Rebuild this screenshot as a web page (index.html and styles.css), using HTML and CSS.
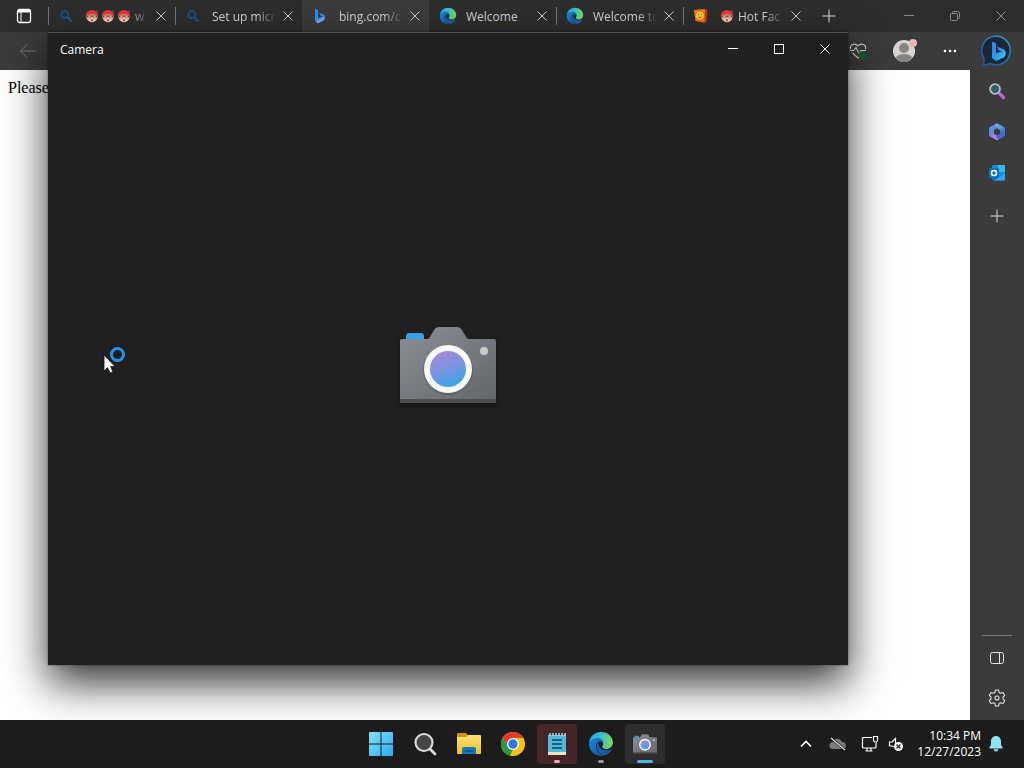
FILE: index.html
```html
<!DOCTYPE html>
<html lang="en">
<head>
<meta charset="utf-8">
<title>Desktop</title>
<link rel="stylesheet" href="styles.css">
</head>
<body>
<svg class="defs" width="0" height="0" aria-hidden="true">
  <defs>
    <linearGradient id="gBody" x1="0" y1="0" x2="1" y2="1"><stop offset="0" stop-color="#8a9096"/><stop offset="1" stop-color="#646569"/></linearGradient>
    <linearGradient id="gLens" x1=".3" y1="0" x2=".7" y2="1"><stop offset="0" stop-color="#a588de"/><stop offset=".45" stop-color="#7d93e0"/><stop offset="1" stop-color="#34a5e8"/></linearGradient>
    <linearGradient id="gEdge" x1="0" y1="0" x2="1" y2=".2"><stop offset="0" stop-color="#2b9ee0"/><stop offset=".5" stop-color="#34c1d4"/><stop offset="1" stop-color="#6fd664"/></linearGradient>
    <linearGradient id="gEdge2" x1="0" y1="0" x2="1" y2="1"><stop offset="0" stop-color="#1b8fe0"/><stop offset="1" stop-color="#114a8b"/></linearGradient>
    <linearGradient id="gBing" x1="0" y1="0" x2="1" y2="1"><stop offset="0" stop-color="#2f7df0"/><stop offset=".6" stop-color="#2ba0f2"/><stop offset="1" stop-color="#54d6ee"/></linearGradient>
    <linearGradient id="gRing" x1="0" y1="1" x2="1" y2="0"><stop offset="0" stop-color="#1b4f9c"/><stop offset="1" stop-color="#2f93c4"/></linearGradient>
    <linearGradient id="gWin" gradientUnits="userSpaceOnUse" x1="0" y1="0" x2="24" y2="24"><stop offset="0" stop-color="#7fe3fb"/><stop offset="1" stop-color="#2ba8ef"/></linearGradient>
    <linearGradient id="gFolder" x1="0" y1="0" x2="0" y2="1"><stop offset="0" stop-color="#ffe07a"/><stop offset="1" stop-color="#f5bd28"/></linearGradient>
    <linearGradient id="gOffice" x1="0" y1="0" x2="1" y2="1"><stop offset="0" stop-color="#7cc3ee"/><stop offset="1" stop-color="#2f6fce"/></linearGradient>
    <linearGradient id="gOffice2" x1="0" y1="0" x2="1" y2="0"><stop offset="0" stop-color="#8a6ee0"/><stop offset="1" stop-color="#d59aec"/></linearGradient>
  </defs>
  <symbol id="close" viewBox="0 0 10 10"><path d="M.5.5l9 9M9.500.5l-9 9" fill="none" stroke="currentColor"/></symbol>
  <symbol id="plus" viewBox="0 0 14 14"><path d="M7 .5v13M.5 7h13" fill="none" stroke="currentColor"/></symbol>
  <symbol id="minus" viewBox="0 0 10 10"><path d="M0 4.500h10" stroke="currentColor"/></symbol>
  <symbol id="search-blue" viewBox="0 0 16 16"><circle cx="6.800" cy="6.500" r="3.500" fill="none" stroke="#1c4f91" stroke-width="1.800"/><path d="M9.500 9.300l3.500 3.500" stroke="#1c4f91" stroke-width="2.400" stroke-linecap="round"/></symbol>
  <symbol id="bing" viewBox="0 0 16 16"><path d="M3 .8l3 1.100v8.400l6.800-2.600c.7 2-.1 3.700-1.700 4.700L6 15.300l-3-2.200z" fill="url(#gBing)"/><path d="M7.200 4.800l4.200 1.800c1.400.8 1.900 2.200 1.500 3.800-.4-1-1-1.500-2-1.900L8.500 7.600z" fill="#3a8df0"/><path d="M4 13.800l7-3.800 1.800-.5c.1 1.400-.6 2.300-1.700 3L6 15.300z" fill="#91a5ed"/></symbol>
  <symbol id="edge" viewBox="0 0 24 24"><path d="M1 11C1.600 5 6.200 1 12 1c6.400 0 11 4.500 11 9.600 0 3.700-2.800 6-6 6-2.500 0-4-1-4-2 0-.8 1-1.200 1-2.900C14 9 11.600 7.400 8.700 7.400 5 7.400 2 9 1 11z" fill="url(#gEdge)"/><path d="M1 12c0-3 3.500-5.600 7.700-5.600 3.300 0 5.500 2.200 5.500 5-1-1.600-2.500-2-3.600-1.700C5 11.200 7 21.500 15.500 22.300 14.500 22.800 13.200 23 12 23 5.900 23 1 18.200 1 12z" fill="url(#gEdge2)"/><path d="M10.400 9.900c-1.500.8-2.400 2.600-2.400 4.800 0 4.600 4.200 7.800 8.600 7.400 2.200-1 4-2.500 5.100-4.500.3-.7-.1-.9-.6-.6-4.400 2.400-10.200.4-11.300-4-.2-1.100 0-2.200.6-3.100z" fill="#1b5fae"/></symbol>
  <symbol id="hot" viewBox="0 0 16 16"><circle cx="8" cy="8.500" r="6.500" fill="#ecb088"/><path d="M1 8C1 4 4 1.500 8 1.500S15 4 15 8c-4-2.200-10-2.200-14 0z" fill="#ee3437"/><path d="M2 7.300h12v2.200H9.500L8 8.500 6.500 9.500H2z" fill="#6b4040"/><path d="M3.800 8.300h2.400M9.800 8.300h2.400" stroke="#f4f4f4" stroke-width="1.100"/><path d="M4 11h8c-.5 2.500-1.800 4-4 4s-3.500-1.500-4-4z" fill="#f6dfd2"/><path d="M6 12h4l-2 2.800z" fill="#d8343c"/><path d="M12 1.500l3 1-1.500 2z" fill="#51638c"/></symbol>
  <symbol id="camera" viewBox="0 0 96 78"><path d="M6 14V9q0-3 3-3h12q3 0 3 3v5z" fill="#36a1dc"/><path d="M2 12h25c2 0 3-2 4-4l3-5c1-2 3-3 5-3h18c2 0 4 1 5 3l3 5c1 2 2 4 4 4h25q2 0 2 2v60q0 2-2 2H2q-2 0-2-2V14q0-2 2-2z" fill="url(#gBody)"/><path d="M0 72h96v2q0 2-2 2H2q-2 0-2-2z" fill="#4d4e51"/><circle cx="48" cy="43" r="25" fill="#3c3e43" opacity=".35"/><circle cx="48" cy="42" r="24" fill="#fafafa"/><circle cx="48" cy="42" r="18" fill="url(#gLens)"/><circle cx="84" cy="24" r="4" fill="#c8cacf"/></symbol>
</svg>

<div class="desktop">
  <main class="browser">
    <header class="tabstrip">
      <button class="tab-menu" aria-label="Tab actions"><svg width="16" height="16" viewBox="0 0 16 16" fill="none" stroke="#fff"><rect x="1.500" y="1.500" width="13" height="13" rx="2" stroke-width="1.300"/><path d="M2 3h12" stroke-width="3"/><path d="M5 4v10"/></svg></button>
      <div class="tab"><svg class="fav"><use href="#search-blue"/></svg><span class="title faces"><svg><use href="#hot"/></svg><svg><use href="#hot"/></svg><svg><use href="#hot"/></svg><span>w</span></span><button class="x" aria-label="Close tab"><svg><use href="#close"/></svg></button></div>
      <div class="tab"><svg class="fav"><use href="#search-blue"/></svg><span class="title">Set up micr</span><button class="x" aria-label="Close tab"><svg><use href="#close"/></svg></button></div>
      <div class="tab active"><svg class="fav"><use href="#bing"/></svg><span class="title">bing.com/c</span><button class="x" aria-label="Close tab"><svg><use href="#close"/></svg></button></div>
      <div class="tab"><svg class="fav large"><use href="#edge"/></svg><span class="title whole">Welcome</span><button class="x" aria-label="Close tab"><svg><use href="#close"/></svg></button></div>
      <div class="tab"><svg class="fav large"><use href="#edge"/></svg><span class="title">Welcome to</span><button class="x" aria-label="Close tab"><svg><use href="#close"/></svg></button></div>
      <div class="tab"><svg class="fav" viewBox="0 0 16 16"><path d="M1 2l11-1 2.500 1-1 12-2 1.200L2.500 13z" fill="#b93f0c"/><path d="M1 2l11-1-.5 13-9-1z" fill="#f17a19"/><circle cx="6.800" cy="7.500" r="4" fill="#ffc83c"/><path d="M5.300 6v1M8.300 6v1M5 8.700c1 1.200 2.600 1.200 3.600 0" stroke="#8d4512" stroke-width=".8" fill="none"/></svg><span class="title faces"><svg><use href="#hot"/></svg><span>Hot Fac</span></span><button class="x" aria-label="Close tab"><svg><use href="#close"/></svg></button></div>
      <button class="new-tab" aria-label="New tab"><svg width="14" height="14"><use href="#plus"/></svg></button>
      <div class="caption dim">
        <button aria-label="Minimize"><svg width="10" height="10"><use href="#minus"/></svg></button>
        <button aria-label="Restore"><svg width="10" height="10" viewBox="0 0 10 10" fill="none" stroke="currentColor"><rect x=".5" y="2.500" width="7" height="7" rx="1"/><path d="M2.500 2V1.500q0-1 1-1h4q2 0 2 2v4q0 1-1 1H8"/></svg></button>
        <button aria-label="Close"><svg width="10" height="10"><use href="#close"/></svg></button>
      </div>
    </header>
    <nav class="toolbar">
      <button class="back" aria-label="Back"><svg width="18" height="16" viewBox="0 0 18 16" fill="none" stroke="#777"><path d="M1.500 8H17M8 1.500L1.500 8 8 14.500"/></svg></button>
      <div class="tools">
        <button aria-label="Browser essentials"><svg width="18" height="18" viewBox="0 0 18 18" fill="none" stroke="#d0d0d0" stroke-width="1.100"><path d="M1.500 7C.5 2.500 6 .5 9 4c3-3.500 8.500-1.500 7.500 3M3.500 11L9 16l1.500-1.500"/><path d="M1 8.500h3.500L7 5.500l3 6 2-3h5"/><circle cx="13" cy="13" r="3.800" fill="#165f2d" stroke="none"/></svg></button>
        <button aria-label="Profile"><svg width="26" height="26" viewBox="0 0 26 26"><circle cx="13" cy="13" r="11" fill="#d7d5d3"/><circle cx="13" cy="10" r="5" fill="#898785"/><path d="M5 20.500q0-4.500 8-4.500t8 4.500c-4 4.500-12 4.500-16 0z" fill="#898785"/><circle cx="22" cy="5" r="4" fill="#edb5b5"/></svg></button>
        <button aria-label="Settings and more"><svg width="14" height="4" viewBox="0 0 14 4" fill="#fff"><circle cx="2" cy="2" r="1.300"/><circle cx="7" cy="2" r="1.300"/><circle cx="12" cy="2" r="1.300"/></svg></button>
        <button class="chat" aria-label="Bing Chat"><svg width="32" height="32" viewBox="0 0 32 32"><path d="M2 30q1.500-3 .8-7A14.300 14.300 0 1 1 9 28.500Q5.500 30.500 2 30z" fill="#1d2733" stroke="url(#gRing)" stroke-width="1.600"/><path d="M11 6.500l4 1.500v10l6-1.200-3.500-1.500-1.500-3.800 6 2.500c4 2 3.500 6.500.5 8.500L15 26l-4-3z" fill="url(#gBing)"/></svg></button>
      </div>
    </nav>
    <div class="content">
      <article class="page">Please</article>
      <aside class="sidebar">
        <button aria-label="Search"><svg width="18" height="18" viewBox="0 0 18 18"><path d="M11.500 11.500l4 4" stroke="#bd62d2" stroke-width="3.200" stroke-linecap="round"/><circle cx="7" cy="7" r="4.900" fill="#305d6e" stroke="#bac2c7" stroke-width="1.800"/></svg></button>
        <button aria-label="Microsoft 365"><svg width="18" height="18" viewBox="0 0 18 18"><path d="M10 .8L16 4q1 .7 1 2v5l-5-2V7L8.500 5 5 7 4 3.800 8 .8q1-.5 2 0z" fill="url(#gOffice)"/><path d="M7 1.200L2 4Q1 4.700 1 6v6l5 .5V7l3-2z" fill="#5f8fdc"/><path d="M1 11q0 2 1 2.600l6 3.200q1 .5 2 0l3-2-4-2-3-2z" fill="url(#gOffice2)"/><path d="M17 10v2q0 1-1 1.600l-6 3.300L8 13l4-2.200V8z" fill="#4a63cf"/></svg></button>
        <button aria-label="Outlook"><svg width="18" height="18" viewBox="0 0 18 18"><rect x="4" y="1" width="13" height="15" rx="1.500" fill="#1490df"/><path d="M10 1h7v7h-7z" fill="#35b8f1"/><path d="M4 9l7 4 6-4v6q0 1.500-1.500 1.500h-10Q4 16.500 4 15z" fill="#1668b3"/><path d="M17 9v6q0 1.500-1.500 1.500H6z" fill="#28a8e8"/><rect x="1" y="4" width="10" height="10" rx="1" fill="#0f6cbd"/><circle cx="6" cy="9" r="2.500" fill="none" stroke="#fff" stroke-width="1.500"/></svg></button>
        <button class="add" aria-label="Customize"><svg width="14" height="14"><use href="#plus"/></svg></button>
        <div class="sidebar-end">
          <button aria-label="Hide sidebar"><svg width="14" height="14" viewBox="0 0 14 14" fill="none" stroke="#e6e6e6"><rect x=".5" y="1.500" width="13" height="11" rx="2"/><path d="M9.500 2v10"/></svg></button>
          <button aria-label="Settings"><svg width="18" height="18" viewBox="0 0 18 18" fill="none" stroke="#e0e0e0" stroke-width="1.100" stroke-linejoin="round"><path d="M7.500 1h3l.6 2.400 1.500.8L15 3.500 16.700 6.300 15 8.100v1.800l1.700 1.800-1.700 2.800-2.400-.7-1.500.8-.6 2.400h-3l-.6-2.400-1.500-.8-2.400.7-1.700-2.800L3 9.900V8.100L1.300 6.300 3 3.500l2.400.7 1.500-.8z"/><circle cx="9" cy="9" r="2"/></svg></button>
        </div>
      </aside>
    </div>
  </main>

  <section class="camera-window" aria-label="Camera">
    <header class="camera-bar">
      <h1>Camera</h1>
      <div class="caption">
        <button aria-label="Minimize"><svg width="10" height="10"><use href="#minus"/></svg></button>
        <button aria-label="Maximize"><svg width="10" height="10" viewBox="0 0 10 10"><rect x=".5" y=".5" width="9" height="9" fill="none" stroke="currentColor"/></svg></button>
        <button aria-label="Close"><svg width="10" height="10"><use href="#close"/></svg></button>
      </div>
    </header>
    <div class="splash"><svg class="camera-logo" width="96" height="78"><use href="#camera"/></svg></div>
  </section>

  <footer class="taskbar">
    <nav class="apps">
      <button aria-label="Start"><svg width="24" height="24" viewBox="0 0 24 24" fill="url(#gWin)"><path d="M1 0h10.500v11.500H0V1q0-1 1-1zM12.500 0H23q1 0 1 1v10.500H12.500zM0 12.500h11.500V24H1q-1 0-1-1zM12.500 12.500H24V23q0 1-1 1H12.500z"/></svg></button>
      <button aria-label="Search"><svg width="24" height="24" viewBox="0 0 24 24"><circle cx="11" cy="10.500" r="8.500" fill="#444546" stroke="#d9d9d9" stroke-width="2.200"/><path d="M17 17l5 5" stroke="#d9d9d9" stroke-width="2.800" stroke-linecap="round"/></svg></button>
      <button aria-label="File Explorer"><svg width="26" height="24" viewBox="0 0 26 24"><path d="M1 2q0-1 1-1h8l2 2-2 3H1z" fill="#d4920e"/><path d="M1 5h9l2-2h12q1 0 1 1v17q0 1-1 1H2q-1 0-1-1z" fill="url(#gFolder)"/><path d="M6 22v-5q0-2 2-2h10q2 0 2 2v5z" fill="#1576b8"/><path d="M9 19h8" stroke="#0d518b" stroke-width="1.500"/></svg></button>
      <button aria-label="Chrome"><svg width="26" height="26" viewBox="0 0 26 26"><circle cx="13" cy="13" r="12" fill="#fbc116"/><path d="M2.600 7A12 12 0 0 1 23.400 7H13l-5.200 9z" fill="#e33b2e"/><path d="M2.600 7l5.200 9 5.200 3-2.500 5.700A12 12 0 0 1 2.600 7z" fill="#229a49"/><path d="M13 25l5.200-9-5.200 3-3 5.600z" fill="#fbc116"/><circle cx="13" cy="13" r="6" fill="#fff"/><circle cx="13" cy="13" r="4.700" fill="#2f76e4"/></svg></button>
      <button class="alert" aria-label="Notepad"><svg width="22" height="24" viewBox="0 0 22 24"><path d="M2 3h18v20H2z" fill="#54b9d9"/><path d="M2 20h18v3H2z" fill="#efe3c5"/><path d="M4 1v3M7 1v3M10 1v3M13 1v3M16 1v3M19 1v3" stroke="#b5dfeb" stroke-width="1.400"/><path d="M6 8h10M6 12h10M6 16h10" stroke="#155f80" stroke-width="1.800"/></svg><i></i></button>
      <button class="running" aria-label="Edge"><svg width="26" height="26"><use href="#edge"/></svg><i></i></button>
      <button class="current" aria-label="Camera"><svg width="24" height="20"><use href="#camera"/></svg><i></i></button>
    </nav>
    <div class="tray">
      <button aria-label="Show hidden icons"><svg width="12" height="8" viewBox="0 0 12 8" fill="none" stroke="#fff" stroke-width="1.600"><path d="M1 6.500l5-5 5 5"/></svg></button>
      <button aria-label="OneDrive"><svg width="18" height="14" viewBox="0 0 18 14"><path d="M4 12a3.500 3.500 0 0 1 0-7C5.500 1 11 .5 13 5c5 0 5 7 1 7z" fill="#77797a"/><path d="M2 1l14 12" stroke="#1c1c1c" stroke-width="2.400"/><path d="M2 1l14 12" stroke="#ddd" stroke-width="1.200"/></svg></button>
      <button aria-label="Network"><svg width="18" height="18" viewBox="0 0 18 18" fill="none" stroke="#fff" stroke-width="1.200"><path d="M11 2.500H2.500q-1 0-1 1V12q0 1 1 1H14q1 0 1-1V8M6 13v3M10 13v3M4.500 16h7"/><path d="M12.500 1.500h4v4l-1 1.500h-2l-1-1.500z"/></svg></button>
      <button class="sound" aria-label="Volume muted"><svg width="16" height="16" viewBox="0 0 16 16" fill="none" stroke="#fff" stroke-width="1.200"><path d="M6.500 11L4 10H1.500V6H4l3.500-3.500V7"/><circle cx="10.500" cy="10.500" r="4.500" fill="#fff" stroke="none"/><path d="M8.500 8.500l4 4M12.500 8.500l-4 4" stroke="#222"/></svg></button>
      <button class="clock"><time>10:34 PM<br>12/27/2023</time></button>
      <button class="bell" aria-label="Notifications"><svg width="14" height="16" viewBox="0 0 14 16" fill="#8fe3ef"><path d="M7 0C3.800 0 2 2.400 2 5.500v3L.4 11.800q-.3.700.5.700h12.200q.8 0 .5-.7L12 8.500v-3C12 2.400 10.200 0 7 0z"/><path d="M4.500 13.300h5q-.5 2.200-2.500 2.200t-2.500-2.200z"/></svg></button>
    </div>
  </footer>

  <svg class="pointer" width="24" height="28" viewBox="0 0 24 28" aria-hidden="true"><path d="M1 8v16l3.500-3.500L7 26l3-1.300L7.600 19.500H12z" fill="#fff" stroke="#111" stroke-width=".8"/><circle cx="14.500" cy="7.500" r="6" fill="none" stroke="#2491e2" stroke-width="3"/></svg>
</div>
</body>
</html>
```
FILE: styles.css
```css
* { box-sizing: border-box; }
body {
  margin: 0;
  font-family: "Open Sans", "Noto Sans", sans-serif;
  font-size: 12px;
  color: #fff;
}
button {
  display: flex;
  align-items: center;
  justify-content: center;
  flex: none;
  padding: 0;
  border: 0;
  background: none;
  color: inherit;
  font: inherit;
}
svg { display: block; flex: none; }
.defs { position: absolute; }

.desktop {
  position: relative;
  display: flex;
  flex-direction: column;
  height: 100vh;
  overflow: hidden;
}
.browser {
  display: flex;
  flex: 1;
  flex-direction: column;
  min-height: 0;
  background: #3b3b3b;
}

.tabstrip { display: flex; height: 32px; background: #2d2d2d; }
.tab-menu { width: 48px; }
.tab {
  display: flex;
  flex: 0 1 127px;
  align-items: center;
  min-width: 0;
  padding: 0 4px 0 10px;
  color: #d0d0d0;
  background: linear-gradient(#777, #777) 0 50% / 1px 18px no-repeat;
}
.tab.active { background: #3b3b3b; }
.tab.active + .tab { background: none; }
.fav { width: 16px; height: 16px; margin-right: 11px; }
.fav.large { width: 18px; height: 18px; margin-right: 9px; }
.title {
  flex: 1;
  min-width: 0;
  overflow: hidden;
  white-space: nowrap;
  mask-image: linear-gradient(90deg, #000 68%, transparent 98%);
}
.title.whole { mask-image: none; }
.faces { display: flex; align-items: center; gap: 2px; }
.faces svg { width: 14px; height: 16px; }
.faces span { margin-left: 2px; }
.x { width: 20px; height: 20px; }
.x svg { width: 10px; height: 10px; }
.new-tab { width: 38px; color: #ddd; }

.caption { display: flex; margin-left: auto; }
.caption button { width: 46px; height: 32px; }
.dim { color: #8a8a8a; }

.toolbar { display: flex; height: 38px; justify-content: space-between; }
.back { width: 56px; }
.tools { display: flex; gap: 6px; }
.tools button { width: 40px; }
.tools .chat { width: 54px; margin-left: -6px; }

.content { display: flex; flex: 1; min-height: 0; }
.page {
  flex: 1;
  padding: 8px;
  background: #fff;
  color: #000;
  font: 16px/20px "Liberation Serif", serif;
}
.sidebar { display: flex; flex-direction: column; width: 54px; color: #ddd; }
.sidebar button { height: 41px; }
.sidebar .add { height: 45px; }
.sidebar-end { margin: auto 12px 2px; padding-top: 2px; border-top: 1px solid #777; }
.sidebar-end button { width: 100%; height: 40px; }

.camera-window {
  position: absolute;
  inset: 32px 176px 103px 48px;
  display: flex;
  flex-direction: column;
  border-top: 1px solid #555;
  background: #202020;
  box-shadow: 0 0 2px rgba(0, 0, 0, .5), 0 18px 40px rgba(0, 0, 0, .8);
}
.camera-bar { display: flex; align-items: center; padding-left: 12px; }
.camera-bar h1 { margin: 0; font-size: 12px; font-weight: 400; }
.splash { display: flex; flex: 1; align-items: center; justify-content: center; padding-top: 2px; }
.camera-logo { filter: drop-shadow(0 2px 2px rgba(0, 0, 0, .4)); }

.taskbar {
  position: relative;
  display: grid;
  grid-template-columns: 1fr auto 1fr;
  align-items: center;
  height: 48px;
  background: #1c1c1c;
}
.apps { display: flex; grid-column: 2; gap: 4px; padding-left: 2px; }
.apps button { position: relative; width: 40px; height: 40px; border-radius: 4px; }
.apps .alert { background: #452525; }
.apps .current { background: #2d2d2d; }
.apps i {
  position: absolute;
  bottom: 1px;
  left: 50%;
  width: 6px;
  height: 3px;
  border-radius: 2px;
  background: #999;
  transform: translateX(-50%);
}
.apps .alert i { background: #ecaaa8; }
.apps .current i { width: 16px; background: #4cb5e7; }
.tray { display: flex; grid-column: 3; align-items: center; justify-content: flex-end; padding-right: 16px; }
.tray button { width: 32px; height: 40px; }
.tray .sound { width: 19px; }
.tray .clock { width: 76px; justify-content: flex-end; font-size: 12px; line-height: 16px; text-align: right; }
.tray .bell { width: 27px; justify-content: flex-end; padding-right: 5px; }

.pointer { position: absolute; top: 347px; left: 103px; }
```
